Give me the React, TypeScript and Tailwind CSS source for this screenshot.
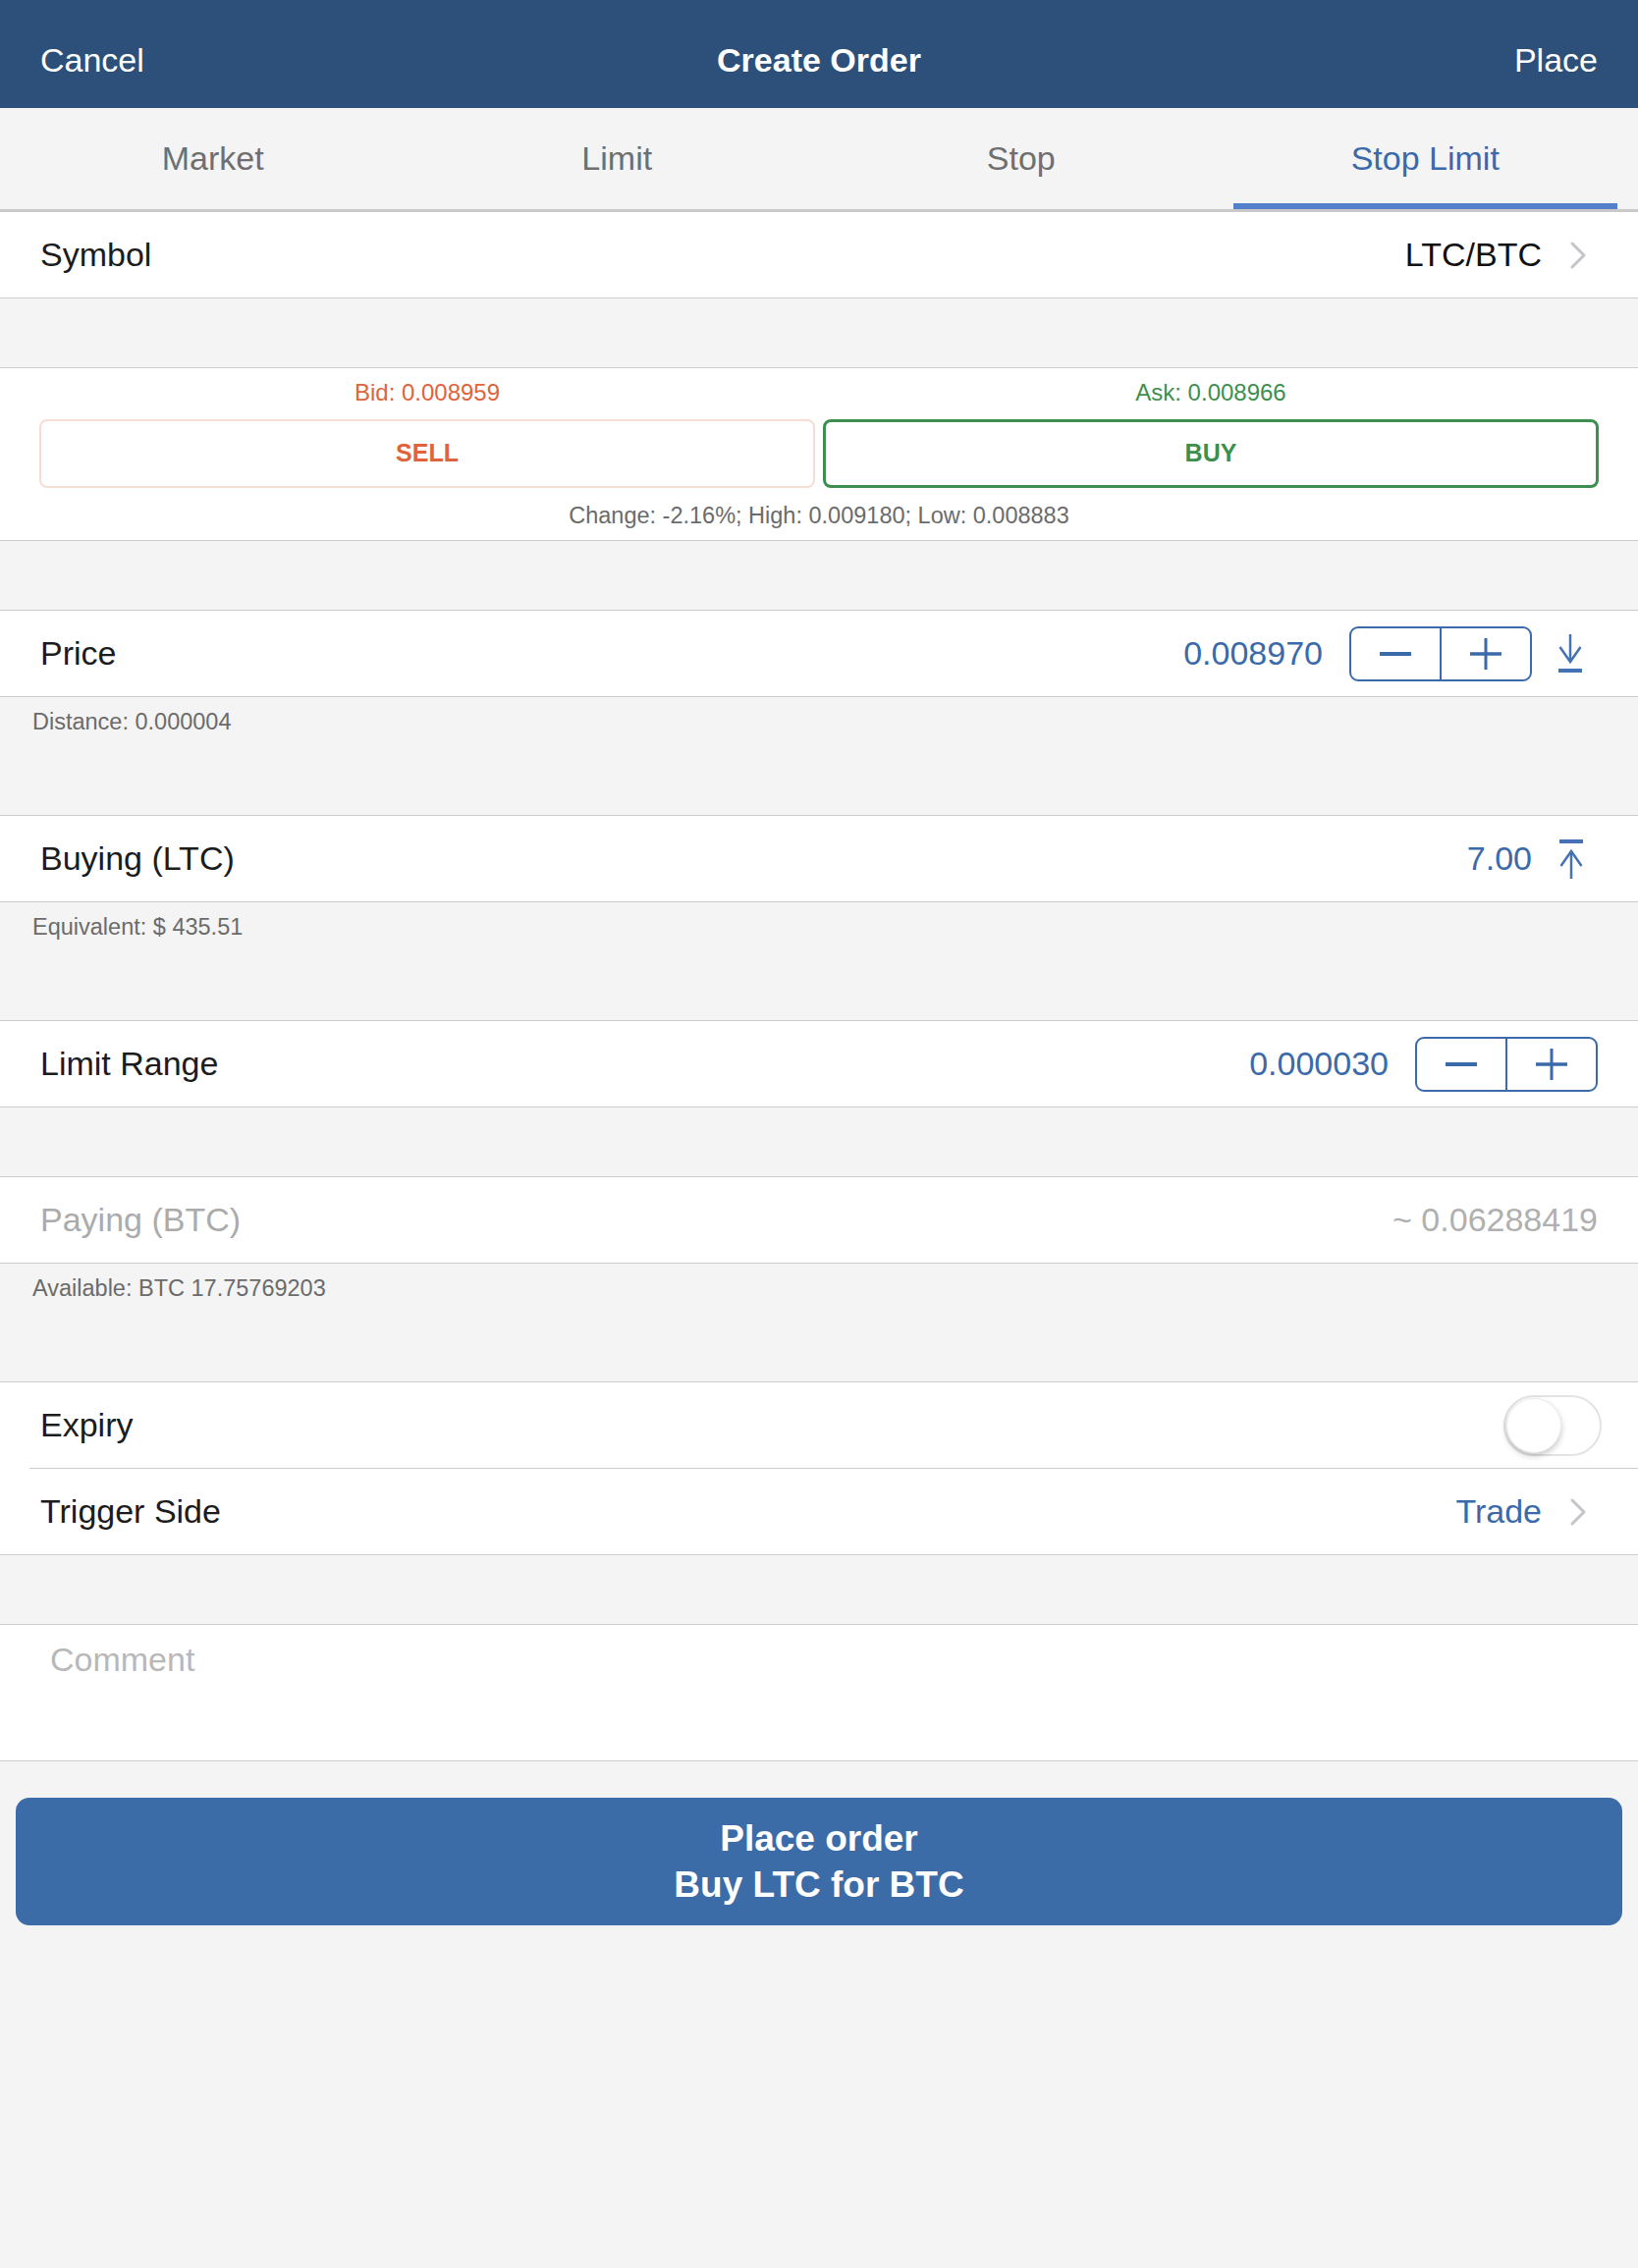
import React from 'react';

const BLUE = 'text-[#3a6aa9]';

function Chevron() {
  return (
    <svg width="16" height="28" viewBox="0 0 16 28" className="ml-[29px] shrink-0">
      <polyline points="2,2 14,14 2,26" fill="none" stroke="#c5c5c9" strokeWidth="3" strokeLinecap="round" strokeLinejoin="round" />
    </svg>
  );
}

function Stepper() {
  return (
    <div className="flex w-[186px] h-[56px] border-2 border-[#3a6aa9] rounded-[9px] overflow-hidden">
      <div className="flex-1 flex items-center justify-center">
        <div className="w-[32px] h-[4px] bg-[#3a6aa9]" />
      </div>
      <div className="flex-1 flex items-center justify-center border-l-2 border-[#3a6aa9]">
        <svg width="32" height="32" viewBox="0 0 32 32">
          <line x1="0" y1="16" x2="32" y2="16" stroke="#3a6aa9" strokeWidth="3.5" />
          <line x1="16" y1="0" x2="16" y2="32" stroke="#3a6aa9" strokeWidth="3" />
        </svg>
      </div>
    </div>
  );
}

function DownIcon() {
  return (
    <svg width="26" height="40" viewBox="0 0 26 40" className="ml-[26px] shrink-0">
      <line x1="13" y1="0" x2="13" y2="28" stroke="#4472b4" strokeWidth="2.5" />
      <polyline points="2.5,13 13,28 23.5,13" fill="none" stroke="#4472b4" strokeWidth="2.5" strokeLinejoin="miter" />
      <rect x="1" y="35" width="24" height="4" fill="#4472b4" />
    </svg>
  );
}

function UpIcon() {
  return (
    <svg width="26" height="40" viewBox="0 0 26 40" className="ml-[27px] shrink-0">
      <rect x="1" y="0" width="24" height="4" fill="#4472b4" />
      <line x1="13" y1="12" x2="13" y2="40" stroke="#4472b4" strokeWidth="2.5" />
      <polyline points="2.5,27 13,12 23.5,27" fill="none" stroke="#4472b4" strokeWidth="2.5" strokeLinejoin="miter" />
    </svg>
  );
}

function Row({ label, muted, children, className = '' }: { label: string; muted?: boolean; children?: React.ReactNode; className?: string }) {
  return (
    <div className={`h-[87px] flex items-center bg-white pl-[41px] ${className}`}>
      <span className={`text-[34px] ${muted ? 'text-[#ababab]' : 'text-[#1c1c1c]'}`}>{label}</span>
      <div className="ml-auto flex items-center">{children}</div>
    </div>
  );
}

function Footer({ text }: { text: string }) {
  return (
    <div className="h-[120px] pt-[10px] pl-[33px] text-[23.5px] leading-[30px] text-[#6b6b6b]">{text}</div>
  );
}

export default function App() {
  const tabs = ['Market', 'Limit', 'Stop', 'Stop Limit'];
  return (
    <div className="min-h-[2310px] bg-[#f4f4f4] font-['Liberation_Sans',Arial,sans-serif]">
      {/* Nav bar */}
      <div className="h-[110px] bg-[#2c5079] grid grid-cols-[1fr_auto_1fr] items-center px-[41px] pt-[12px] text-white text-[34px]">
        <span>Cancel</span>
        <span className="font-bold">Create Order</span>
        <span className="text-right">Place</span>
      </div>

      {/* Tabs */}
      <div className="h-[106px] flex px-[11px] bg-[#f4f4f4] border-b-[3px] border-[#c9c9c9]">
        {tabs.map((t, i) => (
          <div key={t} className="flex-1 relative flex items-center justify-center">
            <span className={`text-[34px] ${i === 3 ? 'text-[#3a6aa9]' : 'text-[#6f6f6f]'}`}>{t}</span>
            {i === 3 && <div className="absolute bottom-0 left-[10px] right-[10px] h-[6px] bg-[#5580cb]" />}
          </div>
        ))}
      </div>

      {/* Symbol */}
      <div className="border-b border-[#cdcdcd]">
        <Row label="Symbol" className="pr-[53px]">
          <span className="text-[34px] text-[#111]">LTC/BTC</span>
          <Chevron />
        </Row>
      </div>

      <div className="h-[70px]" />

      {/* Bid / Ask */}
      <div className="bg-white border-y border-[#cdcdcd] px-[40px] pt-[10px] pb-[10px]">
        <div className="flex gap-[8px]">
          <div className="flex-1 flex flex-col items-center">
            <span className="text-[24px] leading-[30px] text-[#e0633a]">Bid: 0.008959</span>
            <div className="mt-[12px] w-full h-[70px] rounded-[8px] border-2 border-[#f8ddd3] flex items-center justify-center">
              <span className="text-[25px] font-bold text-[#e0633a]">SELL</span>
            </div>
          </div>
          <div className="flex-1 flex flex-col items-center">
            <span className="text-[24px] leading-[30px] text-[#3d8f4e]">Ask: 0.008966</span>
            <div className="mt-[12px] w-full h-[70px] rounded-[8px] border-[3px] border-[#3d8f4e] flex items-center justify-center">
              <span className="text-[25px] font-bold text-[#3d8f4e]">BUY</span>
            </div>
          </div>
        </div>
        <div className="mt-[13px] text-center text-[23.5px] leading-[30px] text-[#6b6b6b]">
          Change: -2.16%; High: 0.009180; Low: 0.008883
        </div>
      </div>

      <div className="h-[70px]" />

      {/* Price */}
      <div className="border-y border-[#cdcdcd]">
        <Row label="Price" className="pr-[56px]">
          <span className={`text-[34px] ${BLUE} mr-[27px]`}>0.008970</span>
          <Stepper />
          <DownIcon />
        </Row>
      </div>
      <Footer text="Distance: 0.000004" />

      {/* Buying */}
      <div className="border-y border-[#cdcdcd]">
        <Row label="Buying (LTC)" className="pr-[55px]">
          <span className={`text-[34px] ${BLUE}`}>7.00</span>
          <UpIcon />
        </Row>
      </div>
      <Footer text="Equivalent: $ 435.51" />

      {/* Limit range */}
      <div className="border-y border-[#cdcdcd]">
        <Row label="Limit Range" className="pr-[41px]">
          <span className={`text-[34px] ${BLUE} mr-[27px]`}>0.000030</span>
          <Stepper />
        </Row>
      </div>

      <div className="h-[70px]" />

      {/* Paying */}
      <div className="border-y border-[#cdcdcd]">
        <Row label="Paying (BTC)" muted className="pr-[41px]">
          <span className="text-[34px] text-[#b0b0b0]">~ 0.06288419</span>
        </Row>
      </div>
      <Footer text="Available: BTC 17.75769203" />

      {/* Expiry + trigger */}
      <div className="border-y border-[#cdcdcd] bg-white">
        <Row label="Expiry" className="pr-[37px]">
          <div className="w-[100px] h-[62px] rounded-full border-2 border-[#e4e4e4] bg-white flex items-center p-[1px]">
            <div className="w-[56px] h-[56px] rounded-full bg-white shadow-[0_3px_6px_rgba(0,0,0,0.22)] border border-[#ececec]" />
          </div>
        </Row>
        <div className="ml-[30px] border-t border-[#cdcdcd]" />
        <Row label="Trigger Side" className="pr-[53px]">
          <span className={`text-[34px] ${BLUE}`}>Trade</span>
          <Chevron />
        </Row>
      </div>

      <div className="h-[70px]" />

      {/* Comment */}
      <div className="h-[140px] bg-white border-y border-[#cdcdcd] pl-[51px] pt-[10px]">
        <span className="text-[34px] text-[#b8b8b8]">Comment</span>
      </div>

      {/* Place button */}
      <div className="px-[16px] pt-[37px]">
        <div className="h-[130px] rounded-[14px] bg-[#3b6ca8] flex flex-col items-center justify-center text-white text-[37px] font-bold leading-[47px]">
          <span>Place order</span>
          <span>Buy LTC for BTC</span>
        </div>
      </div>
    </div>
  );
}
